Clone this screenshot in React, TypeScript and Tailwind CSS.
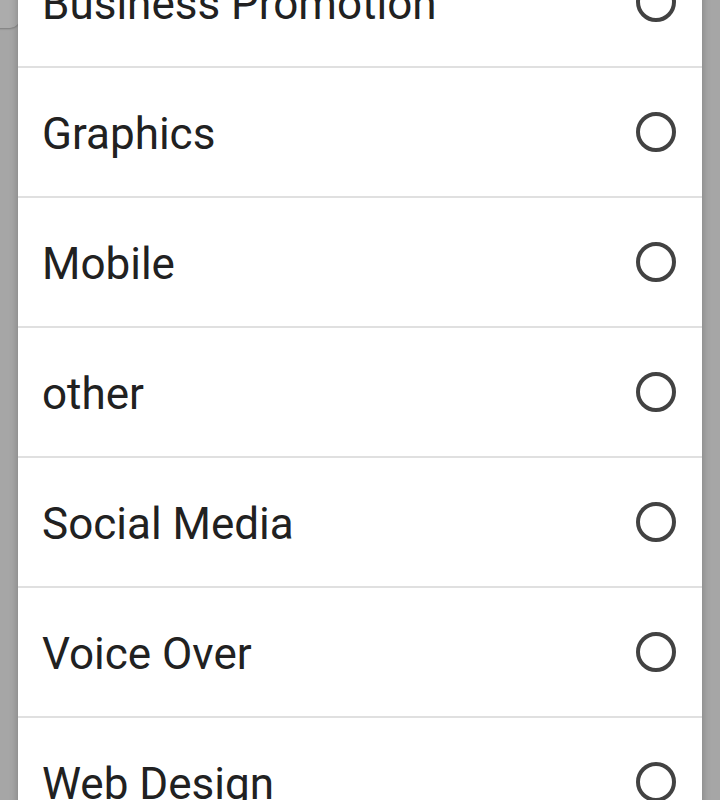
const options = [
  "Business Promotion",
  "Graphics",
  "Mobile",
  "other",
  "Social Media",
  "Voice Over",
  "Web Design",
];

const RadioCircle: React.FC = () => (
  <svg viewBox="0 0 40 40" className="w-10 h-10 shrink-0">
    <circle cx="20" cy="20" r="18" fill="none" stroke="#424242" strokeWidth="4" />
  </svg>
);

const App: React.FC = () => {
  return (
    <div
      className="relative w-[720px] h-[800px] overflow-hidden bg-[#a6a6a6]"
      style={{ fontFamily: "Roboto, 'Noto Sans', sans-serif" }}
    >
      {/* dimmed card peeking behind the dialog */}
      <div className="absolute left-[-20px] top-[-20px] w-[40px] h-[48px] rounded-br-[10px] bg-[#acacac] shadow-[0_1px_2px_rgba(0,0,0,0.25)]" />
      <div className="relative mx-[18px] -mt-[62px] bg-white shadow-[0_0_8px_rgba(0,0,0,0.25)]">
        {options.map((label) => (
          <div
            key={label}
            className="h-[130px] flex items-center justify-between pl-[24px] pr-[26px] border-b-2 border-[#e0e0e0]"
          >
            <span className="mt-[4px] text-[44px] leading-none text-[#212121]">{label}</span>
            <RadioCircle />
          </div>
        ))}
      </div>
    </div>
  );
};

export default App;
